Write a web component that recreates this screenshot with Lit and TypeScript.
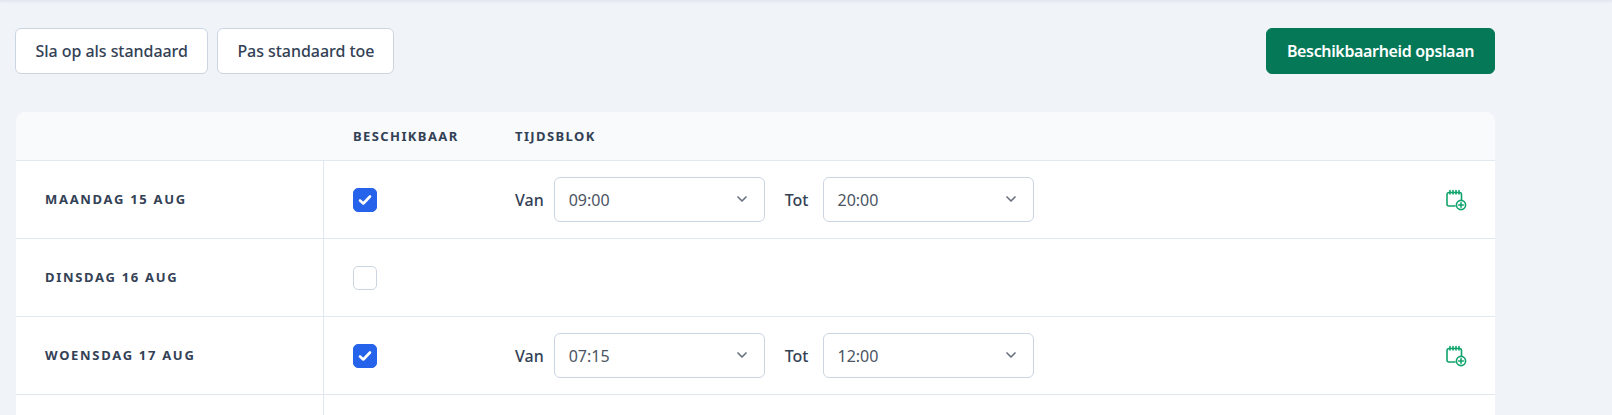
import { LitElement, html, css, svg } from "lit";
import { customElement, property } from "lit/decorators.js";

interface Day {
  label: string;
  available: boolean;
  from?: string;
  to?: string;
}

const chevron = html`<svg class="chevron" width="20" height="20" viewBox="0 0 20 20" fill="none">
  <path d="M6 8l4 4 4-4" stroke="#6b7280" stroke-width="1.7" stroke-linecap="round" stroke-linejoin="round" />
</svg>`;

const addIcon = svg`<svg class="add" width="22" height="22" viewBox="0 0 22 22" fill="none" stroke="#10a46c" stroke-width="1.6" stroke-linecap="round" stroke-linejoin="round">
  <path d="M10 17H4a2 2 0 0 1-2-2V5.500a2 2 0 0 1 2-2h10.500a2 2 0 0 1 2 2V11" />
  <path d="M5 1.500v3.500M8 1.500v3.500M11 1.500v3.500M14 1.500v3.500" />
  <circle cx="16" cy="16" r="4.600" />
  <path d="M16 13.700v4.600M13.700 16h4.600" />
</svg>`;

@customElement("time-select")
class TimeSelect extends LitElement {
  @property({ type: String }) value = "";

  static styles = css`
    :host {
      display: block;
    }
    .select {
      width: 211px;
      height: 45px;
      box-sizing: border-box;
      display: flex;
      align-items: center;
      justify-content: space-between;
      padding: 0 12px 0 14px;
      background: #fff;
      border: 1px solid #cbd5e1;
      border-radius: 6px;
      font-size: 16px;
      font-weight: 400;
      color: #4b5563;
    }
    .chevron {
      display: block;
      margin-top: -1px;
    }
  `;

  render() {
    return html`<div class="select"><span>${this.value}</span>${chevron}</div>`;
  }
}

@customElement("app-root")
export default class AppRoot extends LitElement {
  @property({ type: Array }) days: Day[] = [
    { label: "Maandag 15 aug", available: true, from: "09:00", to: "20:00" },
    { label: "Dinsdag 16 aug", available: false },
    { label: "Woensdag 17 aug", available: true, from: "07:15", to: "12:00" },
    { label: "", available: false },
  ];

  static styles = css`
    :host {
      display: block;
      height: 415px;
      overflow: hidden;
      box-sizing: border-box;
      background: #f0f4f9;
      font-family: "Noto Sans", sans-serif;
      color: #334155;
    }
    .topbar {
      height: 1px;
      background: #e4e8ee;
      box-shadow: 0 1px 2px rgba(100, 116, 139, 0.15);
    }
    .page {
      width: 1480px;
      margin-left: 15px;
      padding-top: 27px;
    }
    .toolbar {
      display: flex;
      gap: 9px;
      margin-bottom: 38px;
    }
    button {
      height: 46px;
      padding: 0 19.5px;
      font: 500 16px "Noto Sans", sans-serif;
      letter-spacing: -0.05px;
      color: #334155;
      background: #fff;
      border: 1px solid #cbd5e1;
      border-radius: 6px;
    }
    button.apply {
      padding: 0 19px;
    }
    button.save {
      margin-left: auto;
      padding: 0 20px;
      color: #fff;
      font-weight: 600;
      letter-spacing: -0.35px;
      background: #047857;
      border-color: #047857;
    }
    .card {
      margin-left: 1px;
      background: #fff;
      border-radius: 10px 10px 0 0;
      overflow: hidden;
    }
    .row {
      display: grid;
      grid-template-columns: 308px 191px 1fr;
      height: 78px;
      box-sizing: border-box;
      border-bottom: 1px solid #e2e8f0;
    }
    .row.head {
      height: 49px;
      background: #f8fafc;
      font-size: 13px;
      font-weight: 700;
      letter-spacing: 1.4px;
      align-items: center;
    }
    .day {
      display: flex;
      align-items: center;
      padding: 0 0 2px 29px;
      border-right: 1px solid #e2e8f0;
      font-size: 13px;
      font-weight: 700;
      letter-spacing: 1.7px;
      text-transform: uppercase;
    }
    .check {
      display: flex;
      align-items: center;
      padding-left: 29px;
    }
    .box {
      width: 24px;
      height: 24px;
      box-sizing: border-box;
      display: flex;
      align-items: center;
      justify-content: center;
      border: 1px solid #cbd5e1;
      border-radius: 5px;
      background: #fff;
    }
    .box.on {
      background: #2563eb;
      border-color: #2563eb;
    }
    .times {
      display: flex;
      align-items: center;
      gap: 10px;
      padding-right: 28px;
      font-size: 16px;
      font-weight: 500;
    }
    .times .to {
      margin: 0 4px 0 10px;
    }
    .add {
      display: block;
      margin-left: auto;
    }
  `;

  renderTimes(d: Day) {
    if (!d.from) return html`<div class="times"></div>`;
    return html`<div class="times">
      <span>Van</span>
      <time-select value=${d.from}></time-select>
      <span class="to">Tot</span>
      <time-select value=${d.to ?? ""}></time-select>
      ${addIcon}
    </div>`;
  }

  render() {
    return html`<div class="topbar"></div>
      <div class="page">
        <div class="toolbar">
          <button>Sla op als standaard</button>
          <button class="apply">Pas standaard toe</button>
          <button class="save">Beschikbaarheid opslaan</button>
        </div>
        <div class="card">
          <div class="row head">
            <div></div>
            <div class="check">BESCHIKBAAR</div>
            <div>TIJDSBLOK</div>
          </div>
          ${this.days.map(
            (d) => html`<div class="row">
              <div class="day">${d.label}</div>
              <div class="check">
                ${d.label
                  ? html`<div class="box ${d.available ? "on" : ""}">
                      ${d.available
                        ? html`<svg width="16" height="16" viewBox="0 0 16 16" fill="none">
                            <path d="M3 8.500l3.300 3L13 4.500" stroke="#fff" stroke-width="2.600" stroke-linecap="round" stroke-linejoin="round" />
                          </svg>`
                        : ""}
                    </div>`
                  : ""}
              </div>
              ${this.renderTimes(d)}
            </div>`
          )}
        </div>
      </div>`;
  }
}

export { TimeSelect };
